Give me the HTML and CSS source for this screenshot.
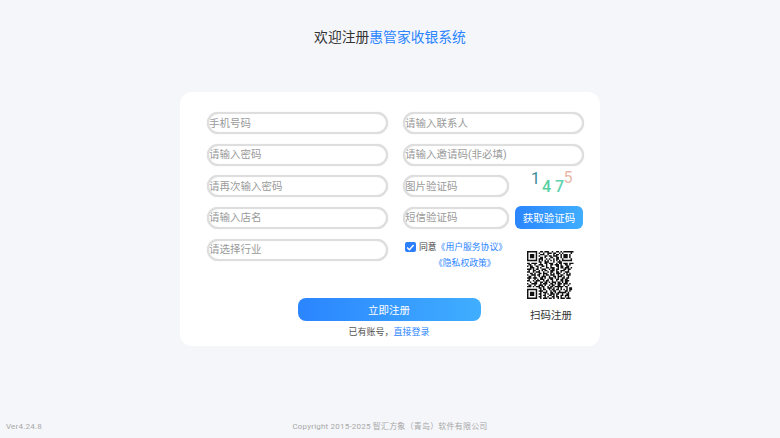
FILE: index.html
```html
<!DOCTYPE html>
<html lang="zh">
<head>
<meta charset="utf-8">
<title>惠管家收银系统</title>
<link rel="stylesheet" href="styles.css">
</head>
<body>
<main class="page">
  <h1 class="title">欢迎注册<span class="brand">惠管家收银系统</span></h1>
  <section class="card">
    <div class="columns">
      <div class="col">
        <input class="field" placeholder="手机号码">
        <input class="field" placeholder="请输入密码">
        <input class="field" placeholder="请再次输入密码">
        <input class="field" placeholder="请输入店名">
        <input class="field" placeholder="请选择行业">
      </div>
      <div class="col">
        <input class="field" placeholder="请输入联系人">
        <input class="field" placeholder="请输入邀请码(非必填)">
        <div class="pair">
          <input class="field short" placeholder="图片验证码">
          <div class="captcha">
            <span class="d d1">1</span><span class="d d2">4</span><span class="d d3">7</span><span class="d d4">5</span>
          </div>
        </div>
        <div class="pair">
          <input class="field short" placeholder="短信验证码">
          <button class="sms" type="button">获取验证码</button>
        </div>
        <div class="extras">
          <div class="agree">
            <span class="check"><svg viewBox="0 0 10 10" width="10.5" height="10.5"><path d="M2 5.2 4.2 7.3 8.2 2.9" fill="none" stroke="#fff" stroke-width="1.3"/></svg></span>
            <div class="agree-text">
              <div class="agree-line"><span class="agree-word">同意</span><a class="link">《用户服务协议》</a></div>
              <div class="agree-second"><a class="link">《隐私权政策》</a></div>
            </div>
          </div>
          <div class="qr-box">
            <svg class="qr" viewBox="0 0 33 33" width="48" height="48"><path fill="none" stroke="#111" stroke-width="1" d="M0 .5h7m2 0h2m1 0h3m2 0h1m2 0h2m1 0h1m1 0h7
M0 1.5h1m5 0h1m1 0h1m2 0h1m2 0h3m1 0h2m2 0h1m1 0h1m5 0h1
M0 2.5h1m1 0h3m1 0h1m2 0h3m2 0h1m3 0h1m1 0h2m1 0h1m1 0h3m1 0h1
M0 3.5h1m1 0h3m1 0h1m1 0h1m3 0h2m1 0h2m1 0h3m2 0h1m1 0h3m1 0h1
M0 4.5h1m1 0h3m1 0h1m2 0h2m1 0h1m3 0h2m2 0h2m1 0h1m1 0h3m1 0h1
M0 5.5h1m5 0h1m1 0h3m2 0h1m1 0h1m2 0h1m1 0h2m2 0h1m5 0h1
M0 6.5h7m1 0h1m1 0h1m1 0h1m1 0h1m1 0h1m1 0h1m1 0h1m1 0h1m1 0h7
M8 7.5h2m2 0h3m3 0h1m2 0h3
M0 8.5h2m1 0h4m2 0h1m2 0h2m1 0h3m2 0h1m1 0h2m1 0h3m1 0h3
M1 9.5h2m2 0h1m2 0h3m2 0h1m2 0h2m1 0h3m1 0h1m2 0h2m1 0h1
M0 10.5h1m1 0h2m2 0h2m2 0h2m1 0h1m2 0h1m3 0h2m1 0h2m2 0h2
M2 11.5h3m2 0h1m1 0h1m3 0h2m1 0h3m2 0h1m1 0h2m1 0h3m1 0h1
M0 12.5h3m1 0h1m1 0h2m2 0h3m2 0h1m1 0h2m1 0h2m3 0h2m1 0h2
M1 13.5h1m2 0h2m2 0h1m1 0h1m1 0h2m2 0h3m1 0h1m2 0h3m2 0h1
M0 14.5h2m2 0h1m1 0h3m2 0h1m2 0h1m1 0h2m2 0h2m1 0h1m2 0h3
M2 15.5h2m1 0h1m2 0h2m1 0h3m2 0h1m1 0h1m1 0h3m2 0h1m1 0h1m1 0h1
M0 16.5h1m2 0h3m1 0h2m2 0h1m1 0h2m1 0h3m2 0h1m1 0h2m2 0h3
M1 17.5h2m2 0h1m2 0h1m1 0h3m2 0h1m2 0h2m1 0h3m1 0h1m2 0h1
M0 18.5h3m1 0h3m2 0h2m1 0h1m2 0h3m1 0h1m1 0h1m2 0h2m1 0h2
M1 19.5h1m3 0h1m1 0h1m1 0h3m2 0h1m1 0h2m2 0h2m1 0h2m1 0h2
M0 20.5h2m2 0h1m1 0h3m2 0h1m1 0h2m2 0h1m2 0h1m2 0h2m1 0h3
M2 21.5h1m2 0h2m2 0h2m1 0h2m1 0h1m1 0h3m1 0h2m1 0h1m1 0h2
M0 22.5h1m2 0h4m2 0h1m1 0h3m2 0h2m1 0h1m1 0h3m1 0h3m1 0h1
M1 23.5h2m2 0h1m2 0h3m1 0h1m2 0h1m1 0h2m2 0h2m2 0h1m2 0h1
M0 24.5h3m1 0h1m1 0h3m1 0h2m2 0h1m1 0h2m1 0h6m1 0h2
M8 25.5h2m1 0h1m2 0h3m1 0h1m2 0h1m1 0h1m3 0h1m1 0h2
M0 26.5h7m2 0h1m1 0h2m2 0h1m1 0h2m1 0h2m1 0h1m1 0h1m1 0h1m1 0h2
M0 27.5h1m5 0h1m1 0h3m2 0h1m2 0h1m1 0h2m2 0h1m3 0h2m1 0h1
M0 28.5h1m1 0h3m1 0h1m2 0h1m1 0h3m2 0h2m1 0h1m1 0h6m1 0h1
M0 29.5h1m1 0h3m1 0h1m1 0h2m2 0h1m1 0h1m1 0h3m1 0h2m2 0h1m2 0h2
M0 30.5h1m1 0h3m1 0h1m2 0h1m1 0h2m2 0h2m1 0h1m1 0h1m2 0h2m1 0h3
M0 31.5h1m5 0h1m1 0h2m2 0h1m1 0h1m2 0h2m1 0h2m1 0h1m2 0h1m1 0h1
M0 32.5h7m2 0h1m1 0h3m1 0h2m1 0h1m2 0h1m1 0h3m1 0h3"/></svg>
            <div class="qr-label">扫码注册</div>
          </div>
        </div>
      </div>
    </div>
    <div class="actions">
      <button class="submit" type="button">立即注册</button>
      <div class="login">已有账号，<a class="link">直接登录</a></div>
    </div>
  </section>
  <footer class="footer">
    <span class="version">Ver4.24.8</span>
    <span class="copyright">Copyright 2015-2025 智汇方象（青岛）软件有限公司</span>
  </footer>
</main>
</body>
</html>
```

FILE: styles.css
```css
* { box-sizing: border-box; }
html, body { margin: 0; height: 100%; }
body {
  background: #f5f6fa;
  font-family: Roboto, "Noto Sans CJK SC", sans-serif;
  color: #333;
}
.page {
  height: 438px;
  display: flex;
  flex-direction: column;
  align-items: center;
}
.title {
  margin: 27px 0 0;
  height: 20px;
  font-size: 13.8px;
  line-height: 20px;
  font-weight: 400;
  color: #333;
}
.brand { color: #2b85ff; }
.card {
  margin-top: 45px;
  width: 420px;
  height: 254px;
  background: #fff;
  border-radius: 12px;
  padding: 20px 16px 0 27px;
}
.columns {
  display: flex;
  gap: 15px;
  height: 186px;
}
.col {
  width: 181px;
  display: flex;
  flex-direction: column;
  gap: 9.67px;
}
.field {
  display: block;
  width: 100%;
  height: 22px;
  flex: none;
  border: 2px solid #dedede;
  border-radius: 11px;
  box-shadow: 0 0 1px #d4d4d4, inset 0 0 1px #e6e6e6;
  padding: 0;
  background: #fff;
  font: 10.5px Roboto, "Noto Sans CJK SC", sans-serif;
  color: #333;
  outline: none;
}
.field::placeholder { color: #9a9a9a; opacity: 1; }
.pair {
  display: flex;
  height: 22px;
  flex: none;
  gap: 6px;
  align-items: center;
}
.field.short { width: 106px; }
.captcha {
  width: 69px;
  height: 22px;
  display: flex;
  font-size: 16px;
  font-weight: 500;
  line-height: 16px;
  padding-left: 16px;
}
.d { display: block; flex: none; height: 16px; }
.d1 { color: #3a8a9a; margin-top: -4px; width: 11px; font-weight: 400; }
.d2 { color: #55d0a0; margin-top: 4px; width: 13px; }
.d3 { color: #5fd2b0; margin-top: 4px; width: 8.5px; }
.d4 { color: #e8b8a8; margin-top: -5px; font-weight: 400; }
.sms {
  width: 68px;
  height: 23px;
  flex: none;
  border: 0;
  border-radius: 6px;
  padding: 0;
  background: linear-gradient(90deg, #2b85ff, #40aeff);
  color: #fff;
  font: 10.5px Roboto, "Noto Sans CJK SC", sans-serif;
}
.extras {
  display: flex;
  justify-content: space-between;
}
.agree {
  display: flex;
  padding-left: 2px;
  gap: 3.5px;
  font-size: 8.8px;
  line-height: 16px;
}
.check {
  width: 10.5px;
  height: 10.5px;
  margin-top: 3px;
  border-radius: 2px;
  background: #2b7fff;
  display: block;
  flex: none;
}
.check svg { display: block; }
.agree-word { color: #444; }
.agree-line { white-space: nowrap; }
.agree-second { padding-left: 15px; }
.link { color: #2b85ff; }
.qr-box {
  width: 58px;
  display: flex;
  flex-direction: column;
  align-items: center;
  padding-top: 12.3px;
  margin-right: 4px;
}
.qr { display: block; flex: none; }
.qr-label {
  margin-top: 9px;
  font-size: 10.5px;
  line-height: 16px;
  color: #333;
  white-space: nowrap;
}
.actions {
  margin-left: -13px;
  display: flex;
  flex-direction: column;
  align-items: center;
}
.submit {
  width: 183px;
  height: 23px;
  border: 0;
  border-radius: 8px;
  padding: 0;
  background: linear-gradient(90deg, #2b85ff, #40aeff);
  color: #fff;
  font: 10.5px Roboto, "Noto Sans CJK SC", sans-serif;
}
.login {
  margin-top: 5px;
  font-size: 9px;
  line-height: 13px;
  color: #555;
}
.footer {
  margin-top: auto;
  align-self: stretch;
  position: relative;
  height: 17px;
  text-align: center;
  font-size: 8px;
  line-height: 12px;
  color: #a8a8a8;
  letter-spacing: .2px;
}
.version {
  position: absolute;
  left: 6px;
  top: 0;
}
```
